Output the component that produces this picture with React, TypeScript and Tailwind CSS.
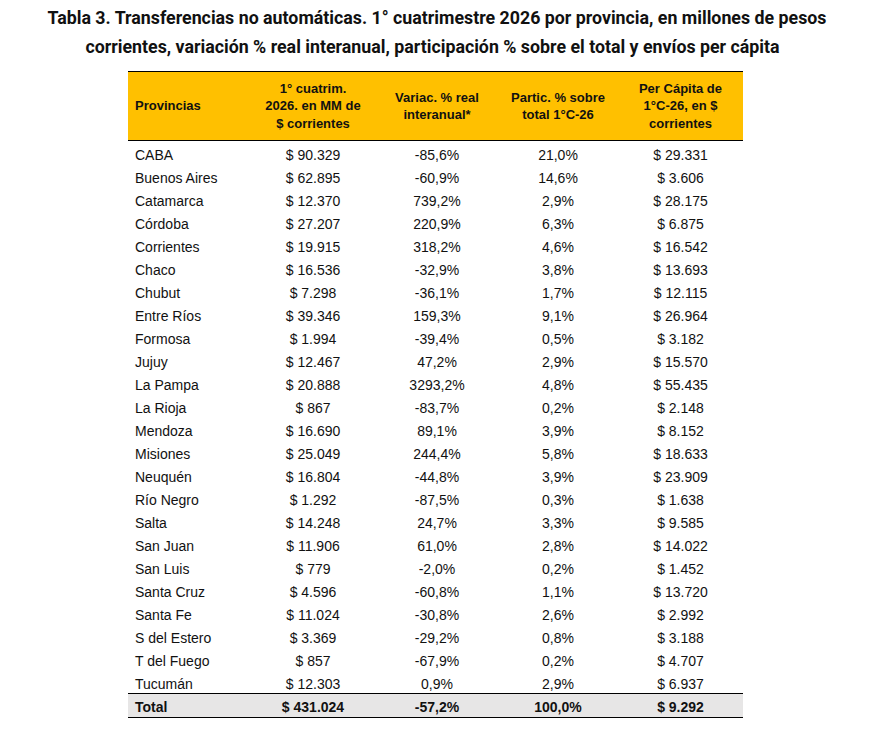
const rows: [string, string, string, string, string][] = [
  ["CABA", "$ 90.329", "-85,6%", "21,0%", "$ 29.331"],
  ["Buenos Aires", "$ 62.895", "-60,9%", "14,6%", "$ 3.606"],
  ["Catamarca", "$ 12.370", "739,2%", "2,9%", "$ 28.175"],
  ["Córdoba", "$ 27.207", "220,9%", "6,3%", "$ 6.875"],
  ["Corrientes", "$ 19.915", "318,2%", "4,6%", "$ 16.542"],
  ["Chaco", "$ 16.536", "-32,9%", "3,8%", "$ 13.693"],
  ["Chubut", "$ 7.298", "-36,1%", "1,7%", "$ 12.115"],
  ["Entre Ríos", "$ 39.346", "159,3%", "9,1%", "$ 26.964"],
  ["Formosa", "$ 1.994", "-39,4%", "0,5%", "$ 3.182"],
  ["Jujuy", "$ 12.467", "47,2%", "2,9%", "$ 15.570"],
  ["La Pampa", "$ 20.888", "3293,2%", "4,8%", "$ 55.435"],
  ["La Rioja", "$ 867", "-83,7%", "0,2%", "$ 2.148"],
  ["Mendoza", "$ 16.690", "89,1%", "3,9%", "$ 8.152"],
  ["Misiones", "$ 25.049", "244,4%", "5,8%", "$ 18.633"],
  ["Neuquén", "$ 16.804", "-44,8%", "3,9%", "$ 23.909"],
  ["Río Negro", "$ 1.292", "-87,5%", "0,3%", "$ 1.638"],
  ["Salta", "$ 14.248", "24,7%", "3,3%", "$ 9.585"],
  ["San Juan", "$ 11.906", "61,0%", "2,8%", "$ 14.022"],
  ["San Luis", "$ 779", "-2,0%", "0,2%", "$ 1.452"],
  ["Santa Cruz", "$ 4.596", "-60,8%", "1,1%", "$ 13.720"],
  ["Santa Fe", "$ 11.024", "-30,8%", "2,6%", "$ 2.992"],
  ["S del Estero", "$ 3.369", "-29,2%", "0,8%", "$ 3.188"],
  ["T del Fuego", "$ 857", "-67,9%", "0,2%", "$ 4.707"],
  ["Tucumán", "$ 12.303", "0,9%", "2,9%", "$ 6.937"],
];

const cols = "grid grid-cols-[122px_126px_122px_120px_125px]";

export default function App() {
  return (
    <div className="w-[870px] h-[732px] bg-white font-['Liberation_Sans',Arial,sans-serif] text-[#111]">
      {/* Title */}
      <div className="pt-[3px] flex flex-col items-center font-['Roboto',sans-serif] font-bold text-[17.8px] leading-[29px] text-[#111] whitespace-nowrap">
        <div className="ml-[4px]">Tabla 3. Transferencias no automáticas. 1° cuatrimestre 2026 por provincia, en millones de pesos</div>
        <div className="mr-[5px]">corrientes, variación % real interanual, participación % sobre el total y envíos per cápita</div>
      </div>

      <div className="ml-[128px] mt-[10px] w-[615px]">
        {/* Header */}
        <div className={`${cols} h-[70px] bg-[#FFC000] border-t-[1.5px] border-b-[1.5px] border-black font-bold text-[13px] leading-[17.5px] items-center`}>
          <div className="pl-[7px]">Provincias</div>
          <div className="text-center">1° cuatrim.<br />2026. en MM de<br />$ corrientes</div>
          <div className="text-center">Variac. % real<br />interanual*</div>
          <div className="text-center">Partic. % sobre<br />total 1°C-26</div>
          <div className="text-center">Per Cápita de<br />1°C-26, en $<br />corrientes</div>
        </div>

        {/* Rows */}
        {rows.map((r) => (
          <div key={r[0]} className={`${cols} h-[23px] items-center pt-[4px] text-[14px] leading-[18px]`}>
            <div className="pl-[7px]">{r[0]}</div>
            <div className="text-center">{r[1]}</div>
            <div className="text-center">{r[2]}</div>
            <div className="text-center">{r[3]}</div>
            <div className="text-center">{r[4]}</div>
          </div>
        ))}

        {/* Total */}
        <div className={`${cols} h-[25px] items-center bg-[#E7E6E6] border-t-[1.5px] border-b-[1.5px] border-black font-bold text-[14px] leading-[18px] pt-[2px]`}>
          <div className="pl-[7px]">Total</div>
          <div className="text-center">$ 431.024</div>
          <div className="text-center">-57,2%</div>
          <div className="text-center">100,0%</div>
          <div className="text-center">$ 9.292</div>
        </div>
      </div>
    </div>
  );
}
